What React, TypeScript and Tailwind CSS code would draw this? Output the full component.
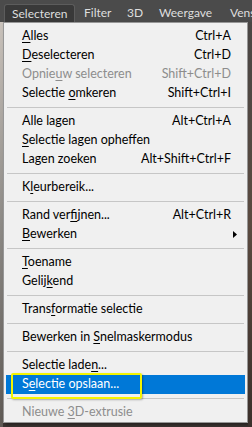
import React from "react";

type Entry =
  | { kind: "sep" }
  | {
      kind: "item";
      label: string;
      mn?: number; // index of the underlined letter
      shortcut?: string;
      disabled?: boolean;
      submenu?: boolean;
      active?: boolean;
    };

const entries: Entry[] = [
  { kind: "item", label: "Alles", mn: 0, shortcut: "Ctrl+A" },
  { kind: "item", label: "Deselecteren", mn: 0, shortcut: "Ctrl+D" },
  { kind: "item", label: "Opnieuw selecteren", mn: 5, shortcut: "Shift+Ctrl+D", disabled: true },
  { kind: "item", label: "Selectie omkeren", mn: 9, shortcut: "Shift+Ctrl+I" },
  { kind: "sep" },
  { kind: "item", label: "Alle lagen", shortcut: "Alt+Ctrl+A" },
  { kind: "item", label: "Selectie lagen opheffen", mn: 0 },
  { kind: "item", label: "Lagen zoeken", shortcut: "Alt+Shift+Ctrl+F" },
  { kind: "sep" },
  { kind: "item", label: "Kleurbereik...", mn: 1 },
  { kind: "sep" },
  { kind: "item", label: "Rand verfijnen...", mn: 8, shortcut: "Alt+Ctrl+R" },
  { kind: "item", label: "Bewerken", mn: 0, submenu: true },
  { kind: "sep" },
  { kind: "item", label: "Toename", mn: 0 },
  { kind: "item", label: "Gelijkend", mn: 5 },
  { kind: "sep" },
  { kind: "item", label: "Transformatie selectie", mn: 5 },
  { kind: "sep" },
  { kind: "item", label: "Bewerken in Snelmaskermodus", mn: 12 },
  { kind: "sep" },
  { kind: "item", label: "Selectie laden...", mn: 13 },
  { kind: "item", label: "Selectie opslaan...", mn: 1, active: true },
  { kind: "sep" },
  { kind: "item", label: "Nieuwe 3D-extrusie", mn: 7, disabled: true },
];

function Label({ text, mn }: { text: string; mn?: number }) {
  if (mn === undefined) return <>{text}</>;
  return (
    <>
      {text.slice(0, mn)}
      <span className="underline underline-offset-2">{text[mn]}</span>
      {text.slice(mn + 1)}
    </>
  );
}

export default function App() {
  return (
    <div
      className="w-[252px] h-[427px] overflow-hidden flex flex-col bg-[#3b3431]"
      style={{ fontFamily: 'Lato, "Noto Sans", sans-serif' }}
    >
      {/* menu bar */}
      <div className="h-[22px] shrink-0 flex items-end bg-[#4b4b4b] text-[#dedede] text-[12px] pl-[4px] whitespace-nowrap">
        <div className="h-[18px] w-[71px] shrink-0 flex items-center pl-[7px] bg-[#393939] border border-b-0 border-[#5c5c5c] rounded-t-[3px]">
          Selecteren
        </div>
        <div className="flex items-center h-[18px] pl-[9px]">
          <span className="w-[43px] shrink-0">Filter</span>
          <span className="w-[32px] shrink-0">3D</span>
          <span className="w-[71px] shrink-0">Weergave</span>
          <span className="shrink-0">Vens</span>
        </div>
      </div>

      <div className="flex flex-1">
        <div className="w-[3px] bg-linear-to-b from-[#c9c2bb] via-[#8d8a86] to-[#5f5a55]" />
        <div className="w-[245px] flex flex-col">
          <div className="h-[401px] bg-[#f0f0f0] border border-[#979797] pt-[4px] px-[2px] text-[12.5px] text-black shadow-[2px_2px_3px_rgba(0,0,0,0.35)]">
            {entries.map((e, i) =>
              e.kind === "sep" ? (
                <div key={i} className="h-[9px] flex items-center px-[1px]">
                  <div className="h-px w-full bg-[#c6c6c6]" />
                </div>
              ) : (
                <div
                  key={i}
                  className={
                    "relative h-[19px] flex items-center pl-[16px] pr-[14px] " +
                    (e.active ? "bg-[#0078d7] text-white " : "") +
                    (e.disabled ? "text-[#8d8d8d]" : "")
                  }
                >
                  <span className="flex-1 whitespace-nowrap">
                    <Label text={e.label} mn={e.mn} />
                  </span>
                  {e.shortcut && <span className="whitespace-nowrap">{e.shortcut}</span>}
                  {e.submenu && (
                    <svg width="4" height="7" viewBox="0 0 4 7" className="mr-[-6px]">
                      <path d="M0 0 L4 3.5 L0 7 Z" fill="#000" />
                    </svg>
                  )}
                  {e.active && (
                    <div className="absolute left-[5px] top-[-2px] w-[131px] h-[26px] border-[2px] border-[#f4f400] rounded-[2px] shadow-[1px_1px_2px_rgba(0,0,0,0.3)]" />
                  )}
                </div>
              )
            )}
          </div>
        </div>
        <div className="flex-1 bg-linear-to-b from-[#4a4644] via-[#5a4a40] to-[#3b302b]" />
      </div>
    </div>
  );
}
